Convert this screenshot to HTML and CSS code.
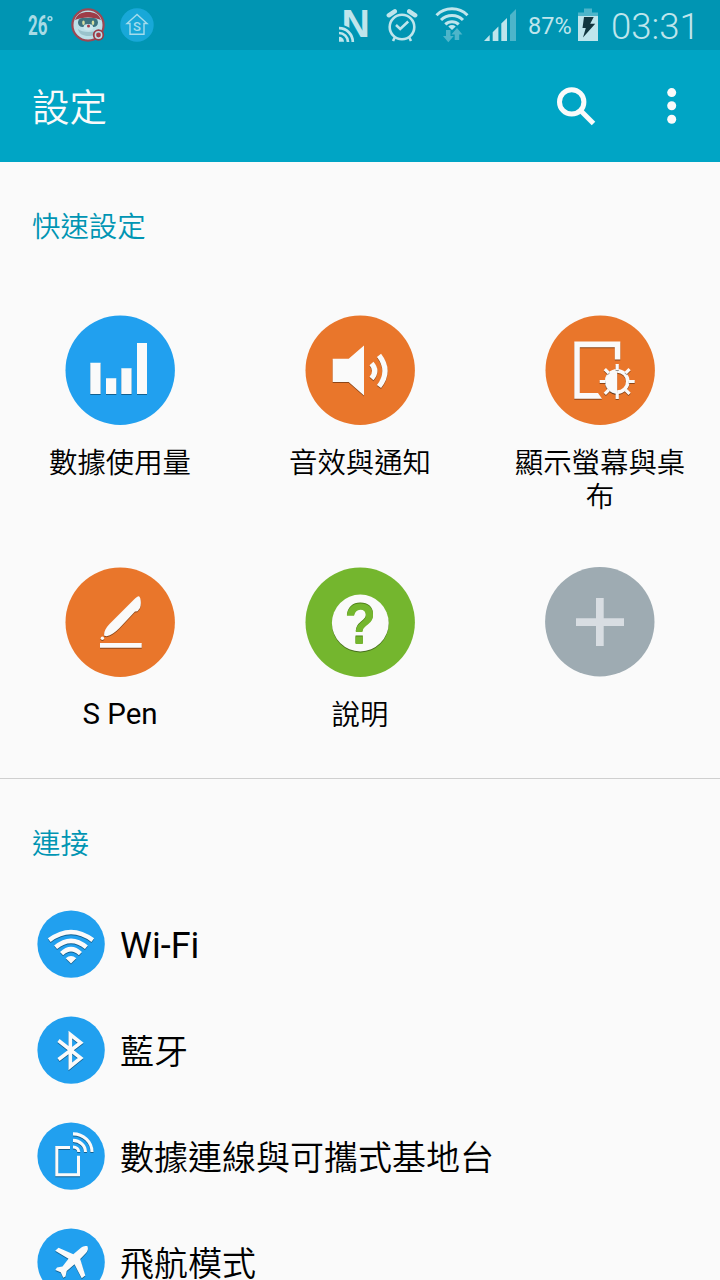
FILE: index.html
```html
<!DOCTYPE html>
<html lang="zh-Hant">
<head>
  <meta charset="UTF-8">
  <meta name="viewport" content="width=device-width, initial-scale=1.0">
  <title>設定</title>
  <link rel="stylesheet" href="styles.css">
</head>
<body>
  <div class="status-bar">
    <svg class="st-temp" width="34" height="50" viewBox="0 0 34 50">
      <text x="0" y="34.5" textLength="19.5" lengthAdjust="spacingAndGlyphs">26</text>
      <circle cx="22" cy="18.6" r="1.9"/>
    </svg>
    <svg class="st-mascot" width="36" height="50" viewBox="0 0 36 50">
      <circle cx="18" cy="25" r="15.6" fill="#bde0e8" stroke="#9c4854" stroke-width="2.2"/>
      <path d="M5 20C7 14 12 12 18 12s11 2 13 8c-7-3.5-19-3.5-26 0z" fill="#9e3c48"/>
      <rect x="8" y="18" width="20" height="9" rx="4.5" fill="#3c7380"/>
      <ellipse cx="13.5" cy="22.8" rx="1.3" ry="2.3" fill="#d7dfa2"/>
      <ellipse cx="23" cy="22.8" rx="1.3" ry="2.3" fill="#d7dfa2"/>
      <path d="M8 29c4 4 17 4 21 0-1 5-5 7-10.500 7S9 34 8 29z" fill="#9ac3cc"/>
      <ellipse cx="18.3" cy="27.3" rx="4.8" ry="3.3" fill="#cce8ee"/>
      <circle cx="18.5" cy="26" r="1.5" fill="#a53c49"/>
      <circle cx="28.5" cy="35" r="4.8" fill="#bde0e8" stroke="#9c3c48" stroke-width="1.8"/>
      <circle cx="28.5" cy="35" r="2.4" fill="#a53c49"/>
    </svg>
    <svg class="st-home" width="34" height="50" viewBox="0 0 34 50">
      <circle cx="17" cy="25" r="16.7" fill="#18a8d8"/>
      <path d="M17 14.5L7 23.5h3V34.2h14V23.5h3z" fill="none" stroke="#a5dcec" stroke-width="1.4"/>
      <text x="17" y="30.5" text-anchor="middle">S</text>
    </svg>

    <div class="status-right">
      <svg class="st-nfc" width="32" height="50" viewBox="0 0 32 50">
        <text x="2.6" y="36.5" textLength="28.3" lengthAdjust="spacingAndGlyphs">N</text>
        <path d="M0 25.5h5.500c5 1.500 9 5 11 11V42H0z" fill="#0095b3"/>
        <g fill="none" stroke="#bfe5ec" stroke-width="2.7">
          <path d="M0 28.2a13.8 13.8 0 0 1 13.8 13.8"/>
          <path d="M0 33a9 9 0 0 1 9 9"/>
        </g>
        <path d="M0 36.8a5 5 0 0 1 5 5H0z" fill="#bfe5ec"/>
      </svg>
      <svg class="st-alarm" width="32" height="50" viewBox="0 0 32 50">
        <g fill="none" stroke="#bfe5ec">
          <circle cx="16" cy="27" r="12.3" stroke-width="2.6"/>
          <path d="M10 25l4.200 4 8-7.500" stroke-width="2.5"/>
          <path d="M2.8 15.3l6-4M29.2 15.3l-6-4" stroke-width="4.4" stroke-linecap="round"/>
          <path d="M9 37l-2 4M23 37l2 4" stroke-width="2.6"/>
        </g>
      </svg>
      <svg class="st-wifi" width="34" height="50" viewBox="0 0 34 50">
        <g fill="none" stroke="#bfe5ec" stroke-width="3">
          <path d="M1.5 15.2a22 22 0 0 1 31 0"/>
          <path d="M6 20a15.5 15.5 0 0 1 22 0"/>
          <path d="M10.3 24.4a9.5 9.5 0 0 1 13.4 0"/>
        </g>
        <path d="M13.3 26.5a5.5 5.5 0 0 1 7.4 0L17 30z" fill="#bfe5ec"/>
        <path d="M11 30h4.500v6h3.300L13.300 42.300 8 36h3z" fill="#4db5ca"/>
        <path d="M22 28l5.400 6.500h-3.200V40h-4.500v-5.500h-3.300z" fill="#4db5ca"/>
      </svg>
      <svg class="st-signal" width="32" height="50" viewBox="0 0 32 50">
        <path d="M0 41l5.700-5.900V41zM8.700 32.200l5.700-5.600V41H8.700zM17.300 23.500l5.700-5.600V41h-5.700z" fill="#bfe5ec"/>
        <path d="M26 15l6-6v32h-6z" fill="#4db5ca"/>
      </svg>
      <span class="battery-level">87%</span>
      <svg class="st-battery" width="20" height="50" viewBox="0 0 20 50">
        <path d="M6 8.500h8v4h6V16H0v-3.500h6z" fill="#4db5ca"/>
        <path d="M0 16h20v25H0z" fill="#bfe5ec"/>
        <path d="M6 17h9.700l-3.500 6.800h5L5 37.500l2.800-9.500H4.500z" fill="#12363f"/>
      </svg>
      <span class="clock">03:31</span>
    </div>
  </div>

  <header class="app-bar">
    <h1>設定</h1>
    <svg class="icon-search" width="40" height="40" viewBox="0 0 40 40">
      <g fill="none" stroke="#fafafa" stroke-width="5">
        <circle cx="15.7" cy="15.9" r="12.2"/>
        <path d="M24.5 24.5L37.5 37.5"/>
      </g>
    </svg>
    <svg class="icon-more" width="10" height="36" viewBox="0 0 10 36">
      <g fill="#fafafa">
        <circle cx="4.7" cy="4.6" r="4.5"/>
        <circle cx="4.7" cy="17.8" r="4.5"/>
        <circle cx="4.7" cy="31.2" r="4.5"/>
      </g>
    </svg>
  </header>

  <main>
    <section class="quick">
      <h2>快速設定</h2>
      <div class="tiles">
        <div class="tile">
          <svg width="110" height="110" viewBox="0 0 110 110">
            <circle cx="55.2" cy="55.2" r="54.7" fill="#21a0ef"/>
            <path class="glyph" d="M25.3 47.7h10.3V79H25.3zM41 63.3h10.3V79H41zM56.3 53.3h10.3V79H56.3zM72 28h10v51H72z"/>
          </svg>
          <span>數據使用量</span>
        </div>
        <div class="tile">
          <svg width="110" height="110" viewBox="0 0 110 110">
            <circle cx="55.2" cy="55.2" r="54.7" fill="#e9762b"/>
            <path class="glyph" d="M27.7 43.7h16L59 30.5v50L43.700 67h-16z"/>
            <path class="glyph-line" stroke-width="5.2" d="M66.5 48.500q6.500 7.500 0 15M74 40.300q12 15.700 0 31.200"/>
          </svg>
          <span>音效與通知</span>
        </div>
        <div class="tile">
          <svg width="110" height="110" viewBox="0 0 110 110">
            <circle cx="55.2" cy="55.2" r="54.7" fill="#e9762b"/>
            <path class="glyph" d="M29.3 26.5h46v18h-5.500V32.200H34.800V78H53l4 5.700H29.300z"/>
            <circle class="glyph-line" cx="72.2" cy="66.5" r="10.6" stroke-width="3.6"/>
            <path class="glyph" d="M72.2 54.5a12 12 0 0 0 0 24z"/>
            <path class="glyph-line" stroke-width="3.2" d="M72.2 49v6M72.2 78v6M54.7 66.5h6M83.7 66.5h6M59.8 54.1l4 4M84.6 54.1l-4 4M59.8 78.9l4-4M84.6 78.9l-4-4"/>
          </svg>
          <span>顯示螢幕與桌布</span>
        </div>
        <div class="tile">
          <svg width="110" height="110" viewBox="0 0 110 110">
            <circle cx="55.2" cy="55.2" r="54.7" fill="#e9762b"/>
            <path class="glyph" d="M39 68.5C39 64 41 60.5 44.5 57L69 32.5C71 30.5 73 29 74 29.3 76 31 76.5 37 75 41l-2.500 3.200-2.500.3L54 61.5C50 65.5 46 68.5 41.5 69.2z"/>
            <circle class="glyph" cx="37.4" cy="71.2" r="1.7"/>
            <path class="glyph" d="M35 76h41.7v4.700H35z"/>
          </svg>
          <span class="latin">S Pen</span>
        </div>
        <div class="tile">
          <svg width="110" height="110" viewBox="0 0 110 110">
            <circle cx="55.2" cy="55.2" r="54.7" fill="#74b62e"/>
            <circle class="glyph" cx="55.3" cy="56" r="28.4"/>
            <text class="help-shade" x="39.6" y="76" textLength="31.5" lengthAdjust="spacingAndGlyphs">?</text>
            <text class="help-mark" x="39.6" y="77" textLength="31.5" lengthAdjust="spacingAndGlyphs">?</text>
          </svg>
          <span>說明</span>
        </div>
        <div class="tile">
          <svg width="110" height="110" viewBox="0 0 110 110">
            <circle cx="54.8" cy="54.8" r="54.7" fill="#9eabb2"/>
            <path d="M51 31h7.700v20.200H79v7.700H58.700V79H51V58.900H31v-7.700h20z" fill="#d8dde2"/>
          </svg>
        </div>
      </div>
    </section>

    <section class="connect">
      <h2>連接</h2>
      <ul class="rows">
        <li>
          <svg width="68" height="68" viewBox="0 0 68 68">
            <circle cx="34.1" cy="34.1" r="33.7" fill="#21a0ef"/>
            <path class="glyph-line" stroke-width="4.6" d="M12.2 30.2q21.8-16.4 43.6 0M18.6 37.3q15.4-13 30.8 0M24.6 43.7q9.400-9 18.800 0"/>
            <path class="glyph" d="M28.7 48.3q5.300-4.400 10.600 0L34 53.400z"/>
          </svg>
          <span class="latin">Wi-Fi</span>
        </li>
        <li>
          <svg width="68" height="68" viewBox="0 0 68 68">
            <circle cx="34.1" cy="34.1" r="33.7" fill="#21a0ef"/>
            <path class="glyph-line" stroke-width="3.6" stroke-miterlimit="8" d="M21.5 24.5L43.7 42 33.3 50.5V18.5L43.7 26.8 21.5 43.5"/>
          </svg>
          <span>藍牙</span>
        </li>
        <li>
          <svg width="68" height="68" viewBox="0 0 68 68">
            <circle cx="34.1" cy="34.1" r="33.7" fill="#21a0ef"/>
            <path class="glyph-line" stroke-width="3" d="M33 25.5H19.8v27.3h21.7V33.7"/>
            <path class="glyph-line" stroke-width="3.1" d="M36 11.9a19 18.2 0 0 1 19 18.2M36 18.4a12.5 11.7 0 0 1 12.5 11.7M36 25a5.8 5.1 0 0 1 5.8 5.1"/>
          </svg>
          <span>數據連線與可攜式基地台</span>
        </li>
        <li>
          <svg width="68" height="68" viewBox="0 0 68 68">
            <circle cx="34.1" cy="34.1" r="33.7" fill="#21a0ef"/>
            <path class="glyph" d="M50.5 18.2c-2.500-.8-4.500 0-6.500 1.600L36.3 26.2 21.5 19.7l-3.300 3L31.5 30.8 25.5 38.5 20 39.6 18.3 42l5.400 2.200 2.600 5.600 2.200-1.200 1.200-5.600 7.800-6.700L44.7 50.3l3.600-2.700L43.2 31 49 25c1.800-2 2.400-4.300 1.500-6.800z"/>
          </svg>
          <span>飛航模式</span>
        </li>
      </ul>
    </section>
  </main>
</body>
</html>
```
FILE: styles.css
```css
* {
  box-sizing: border-box;
}

body {
  margin: 0;
  height: 1280px;
  overflow: hidden;
  background: #fafafa;
  color: #000;
  font-family: Roboto, "Noto Sans CJK TC", sans-serif;
}

svg {
  display: block;
  flex: none;
}

h1,
h2 {
  margin: 0;
  font-weight: 350;
}

/* status bar */
.status-bar {
  display: flex;
  height: 50px;
  padding-left: 28px;
  background: #0095b3;
  color: #bfe5ec;
}

.st-temp text {
  font: bold 27px Roboto, sans-serif;
  fill: #a8dbe5;
}

.st-temp circle {
  fill: none;
  stroke: #a8dbe5;
  stroke-width: 1.5;
}

.st-mascot {
  margin-left: 8px;
}

.st-home {
  margin-left: 14px;
}

.st-home text {
  font: 500 13px Roboto, sans-serif;
  fill: #a5dcec;
}

.status-right {
  display: flex;
  margin-left: auto;
  width: 381px;
  line-height: 50px;
}

.st-nfc text {
  font: bold 38px "Liberation Sans", sans-serif;
  fill: #bfe5ec;
}

.st-alarm {
  margin-left: 15px;
}

.st-wifi {
  margin-left: 17px;
}

.st-signal {
  margin-left: 15px;
}

.battery-level {
  width: 50px;
  margin-left: 12px;
  padding-top: 1px;
  font-size: 23.5px;
}

.st-battery {
  margin-right: 13px;
}

.clock {
  padding-top: 2px;
  font-size: 36.5px;
  font-weight: 300;
}

/* app bar */
.app-bar {
  display: flex;
  align-items: center;
  height: 112px;
  padding: 0 43px 0 32px;
  background: #00a5c5;
  color: #fafafa;
}

.app-bar h1 {
  flex: 1;
  padding-bottom: 4px;
  font-size: 37.5px;
}

.icon-more {
  margin-left: 71px;
}

/* quick settings */
.quick {
  height: 617px;
  padding-top: 45px;
  border-bottom: 1px solid #cfcfcf;
}

h2 {
  padding-left: 32px;
  color: #0095b3;
  font-size: 28.4px;
  line-height: 42px;
}

.tiles {
  display: grid;
  grid-template-columns: repeat(3, 240px);
  grid-auto-rows: 252px;
  margin-top: 66px;
}

.tile {
  display: flex;
  flex-direction: column;
  align-items: center;
  padding: 0 32px;
  font-size: 28.4px;
  font-weight: 350;
  line-height: 34px;
  text-align: center;
}

.tile span {
  margin-top: 22px;
}

.tile .latin {
  margin-top: 20px;
  font-size: 29.5px;
  font-weight: 400;
}

.glyph {
  fill: #fafafa;
  filter: drop-shadow(0 1px 0.5px rgba(0, 0, 0, 0.4));
}

.glyph-line {
  fill: none;
  stroke: #fafafa;
  filter: drop-shadow(0 1px 0.5px rgba(0, 0, 0, 0.4));
}

.help-mark,
.help-shade {
  font: bold 58px "Liberation Sans", sans-serif;
  fill: #74b62e;
}

.help-shade {
  fill: #4f8119;
}

/* connections */
.connect {
  padding-top: 45px;
}

.rows {
  margin: 25px 0 0;
  padding: 0;
  list-style: none;
}

.rows li {
  display: flex;
  align-items: center;
  height: 106px;
  padding-left: 37px;
  font-size: 34px;
  font-weight: 350;
  line-height: 44px;
}

.rows span {
  margin-left: 15px;
  padding-top: 3px;
}

.rows .latin {
  font-size: 36px;
  font-weight: 400;
}
```
